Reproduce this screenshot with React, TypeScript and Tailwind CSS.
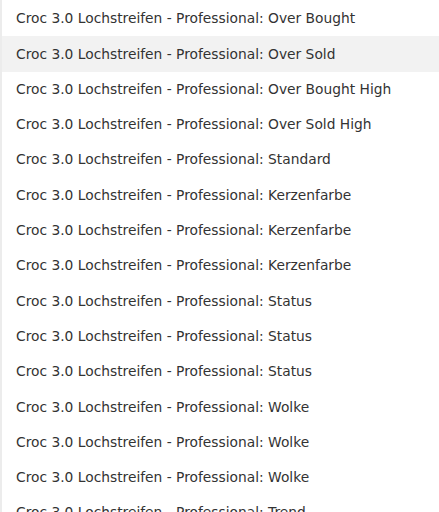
const items = [
  "Over Bought",
  "Over Sold",
  "Over Bought High",
  "Over Sold High",
  "Standard",
  "Kerzenfarbe",
  "Kerzenfarbe",
  "Kerzenfarbe",
  "Status",
  "Status",
  "Status",
  "Wolke",
  "Wolke",
  "Wolke",
  "Trend",
];

export default function App() {
  return (
    <div className="h-[512px] w-[439px] overflow-hidden bg-white border-l-2 border-[#ececec] pt-px">
      <ul className="font-['DejaVu_Sans',sans-serif] text-[13.8px] text-[#333]">
        {items.map((label, i) => (
          <li
            key={i}
            className={`flex h-[35.3px] items-center pl-[14px] whitespace-nowrap ${i === 1 ? "bg-[#f2f2f2]" : ""}`}
          >
            Croc 3.0 Lochstreifen - Professional: {label}
          </li>
        ))}
      </ul>
    </div>
  );
}
